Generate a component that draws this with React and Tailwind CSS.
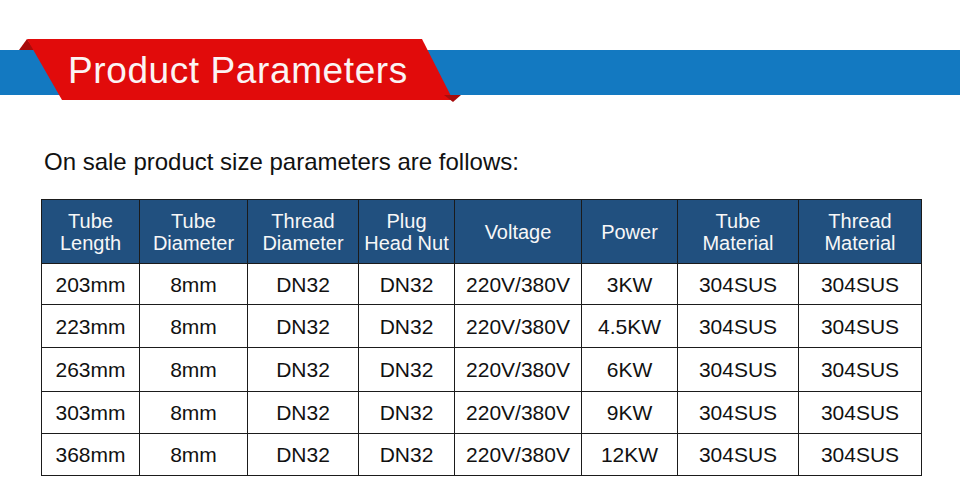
import React from "react";

const headers = [
  ["Tube", "Length"],
  ["Tube", "Diameter"],
  ["Thread", "Diameter"],
  ["Plug", "Head Nut"],
  ["Voltage"],
  ["Power"],
  ["Tube", "Material"],
  ["Thread", "Material"],
];

const widths = [98, 108, 111, 96, 127, 96, 121, 123];

const rows = [
  ["203mm", "8mm", "DN32", "DN32", "220V/380V", "3KW", "304SUS", "304SUS"],
  ["223mm", "8mm", "DN32", "DN32", "220V/380V", "4.5KW", "304SUS", "304SUS"],
  ["263mm", "8mm", "DN32", "DN32", "220V/380V", "6KW", "304SUS", "304SUS"],
  ["303mm", "8mm", "DN32", "DN32", "220V/380V", "9KW", "304SUS", "304SUS"],
  ["368mm", "8mm", "DN32", "DN32", "220V/380V", "12KW", "304SUS", "304SUS"],
];

const rowHeights = ["h-[41px]", "h-[43px]", "h-[44px]", "h-[42px]", "h-[42px]"];

export default function App() {
  return (
    <div
      className="relative w-[960px] h-[490px] bg-white overflow-hidden pt-[39px]"
      style={{ fontFamily: '"Liberation Sans", Arial, sans-serif' }}
    >
      {/* Banner */}
      <div className="relative h-[63px] pt-[11px]">
        <div className="h-[45px] bg-[#1379c1]" />
        <svg
          className="absolute left-0 top-0"
          width="470"
          height="63"
          viewBox="0 0 470 63"
        >
          <polygon points="19,11 27,0 35,11" fill="#a80c0c" />
          <polygon points="27,0 422,0 453,61 62,61" fill="#e10b0b" />
          <polygon points="444,56 461,56 453,63" fill="#a80c0c" />
        </svg>
        <div className="absolute left-[68px] top-[13px] text-[37px] leading-none tracking-[0.6px] text-[#fbf4f4]">
          Product Parameters
        </div>
      </div>

      {/* Subtitle */}
      <div className="ml-[44px] mt-[46px] text-[24px] leading-[28px] text-[#111]">
        On sale product size parameters are follows:
      </div>

      {/* Table */}
      <table className="ml-[41px] mt-[23px] table-fixed border-collapse w-[880px]">
        <colgroup>
          {widths.map((w, i) => (
            <col key={i} style={{ width: w }} />
          ))}
        </colgroup>
        <thead>
          <tr className="h-[64px] bg-[#21507f]">
            {headers.map((h, i) => (
              <th
                key={i}
                className="border border-[#1b1b1b] p-0 text-center align-middle font-normal text-[20px] leading-[22px] text-[#f7f7f7]"
              >
                {h.map((line, j) => (
                  <div key={j} className="whitespace-nowrap">
                    {line}
                  </div>
                ))}
              </th>
            ))}
          </tr>
        </thead>
        <tbody>
          {rows.map((r, ri) => (
            <tr key={ri} className={rowHeights[ri]}>
              {r.map((c, ci) => (
                <td
                  key={ci}
                  className="border border-[#1b1b1b] p-0 text-center align-middle text-[21px] leading-none text-[#111] whitespace-nowrap"
                >
                  {c}
                </td>
              ))}
            </tr>
          ))}
        </tbody>
      </table>
    </div>
  );
}
